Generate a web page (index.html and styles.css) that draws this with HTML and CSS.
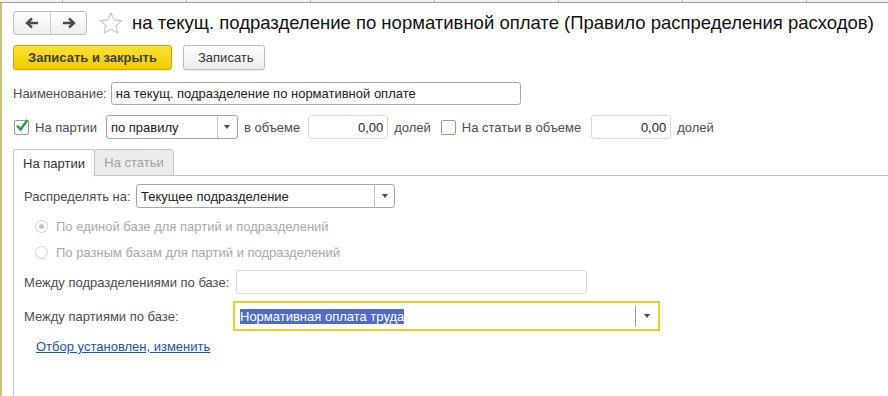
FILE: index.html
```html
<!DOCTYPE html>
<html lang="ru">
<head>
    <meta charset="UTF-8">
    <title>Правило распределения расходов</title>
    <link rel="stylesheet" href="styles.css">
</head>
<body>
    <div class="strip"></div>
    <div class="window">
        <div class="header">
            <div class="nav">
                <button class="nav-btn">
                    <svg width="14" height="12" viewBox="0 0 14 12"><path d="M13 6H3M7 1.5L2 6l5 4.5" fill="none" stroke="#4a4a4a" stroke-width="2.4"/></svg>
                </button>
                <button class="nav-btn">
                    <svg width="14" height="12" viewBox="0 0 14 12"><path d="M1 6h10M7 1.5L12 6l-5 4.5" fill="none" stroke="#4a4a4a" stroke-width="2.4"/></svg>
                </button>
            </div>
            <svg class="star" width="24" height="22" viewBox="0 0 24 22"><path d="M12 1l3.2 6.9 7.4.8-5.5 5 1.6 7.3L12 17.3 5.3 21l1.6-7.3-5.5-5 7.4-.8z" fill="none" stroke="#c4c4c4" stroke-width="1.1"/></svg>
            <h1 class="title">на текущ. подразделение по нормативной оплате (Правило распределения расходов)</h1>
        </div>

        <div class="actions">
            <button class="btn btn-main">Записать и закрыть</button>
            <button class="btn">Записать</button>
        </div>

        <div class="row row-name">
            <span class="label">Наименование:</span>
            <div class="field field-name">на текущ. подразделение по нормативной оплате</div>
        </div>

        <div class="row row-part">
            <span class="check checked">
                <svg width="14" height="13" viewBox="0 0 14 13"><path d="M2 6.5l3.5 4L12.5 1" fill="none" stroke="#2f9a3c" stroke-width="2.4"/></svg>
            </span>
            <span class="label label-part">На партии</span>
            <div class="field select select-rule">
                <span class="select-text">по правилу</span>
                <span class="select-btn"><i class="tri"></i></span>
            </div>
            <span class="label">в объеме</span>
            <div class="field num num-part">0,00</div>
            <span class="label">долей</span>
            <span class="check"></span>
            <span class="label">На статьи в объеме</span>
            <div class="field num num-item">0,00</div>
            <span class="label">долей</span>
        </div>

        <div class="tabs">
            <div class="tab active">На партии</div>
            <div class="tab">На статьи</div>
            <div class="tab-fill"></div>
        </div>

        <div class="panel">
            <div class="row row-distr">
                <span class="label label-distr">Распределять на:</span>
                <div class="field select select-distr">
                    <span class="select-text">Текущее подразделение</span>
                    <span class="select-btn"><i class="tri"></i></span>
                </div>
            </div>

            <div class="radio-row radio-first">
                <span class="radio on"></span>
                <span class="label muted">По единой базе для партий и подразделений</span>
            </div>
            <div class="radio-row">
                <span class="radio"></span>
                <span class="label muted">По разным базам для партий и подразделений</span>
            </div>

            <div class="row row-depts">
                <span class="label label-depts">Между подразделениями по базе:</span>
                <div class="field field-depts"></div>
            </div>

            <div class="row row-batch">
                <span class="label label-batch">Между партиями по базе:</span>
                <div class="field select select-batch">
                    <span class="select-text"><span class="hl">Нормативная оплата труда</span></span>
                    <span class="select-btn"><i class="tri"></i></span>
                </div>
            </div>

            <a class="link" href="#">Отбор установлен, изменить</a>
        </div>
    </div>
</body>
</html>
```

FILE: styles.css
```css
body {
    margin: 0;
    padding: 0;
    font-family: "Liberation Sans", Arial, sans-serif;
    font-size: 13px;
    color: #4d4d4d;
    background: #fff;
    width: 888px;
    height: 396px;
    overflow: hidden;
}
.strip {
    height: 2px;
    background-color: #f2f2f2;
    background-image: repeating-linear-gradient(90deg, transparent 0, transparent 62px, #b4b4b4 62px, #b4b4b4 63px, transparent 63px, transparent 124px);
    border-bottom: 1px solid #9a9a9a;
}
.window {
    border-left: 2px solid #c9c084;
    height: 393px;
    padding-left: 11px;
    box-sizing: border-box;
}
.header {
    display: flex;
    align-items: center;
    padding-top: 8px;
    height: 24px;
}
.nav {
    display: flex;
    height: 24px;
    border: 1px solid #bdbdbd;
    border-radius: 3px;
    box-sizing: border-box;
    background: linear-gradient(#ffffff, #eeeeee);
}
.nav-btn {
    width: 36px;
    height: 22px;
    border: none;
    background: transparent;
    padding: 0;
    display: flex;
    align-items: center;
    justify-content: center;
}
.nav-btn + .nav-btn {
    border-left: 1px solid #cfcfcf;
}
.star {
    margin-left: 12px;
    margin-top: -1px;
}
.title {
    margin: 0 0 0 9px;
    font-size: 18.5px;
    font-weight: normal;
    color: #111;
    white-space: nowrap;
}
.actions {
    display: flex;
    gap: 11px;
    margin-top: 10px;
}
.btn {
    height: 25px;
    padding: 0 14px;
    font-family: inherit;
    font-size: 13px;
    color: #333;
    border: 1px solid #bcbcbc;
    border-radius: 3px;
    background: linear-gradient(#ffffff, #ececec);
    box-shadow: 0 1px 1px rgba(0,0,0,0.08);
}
.btn-main {
    width: 159px;
    font-weight: bold;
    color: #404040;
    border-color: #c9a900;
    background: linear-gradient(#fbe037, #f1cc00);
}
.btn + .btn {
    width: 82px;
}
.row {
    display: flex;
    align-items: center;
}
.label {
    white-space: nowrap;
}
.field {
    box-sizing: border-box;
    height: 24px;
    border: 1px solid #d3d3d3;
    border-radius: 3px;
    background: #fff;
    color: #222;
    padding: 0 4px;
    display: flex;
    align-items: center;
    white-space: nowrap;
}
.row-name {
    margin-top: 12px;
}
.field-name {
    width: 410px;
    height: 23px;
    margin-left: 4px;
    border-color: #a9a9a9;
}
.row-part {
    margin-top: 10px;
}
.row-part .label {
    margin-left: 6px;
}
.check {
    width: 15px;
    height: 15px;
    box-sizing: border-box;
    border: 1px solid #9b9b9b;
    border-radius: 2px;
    background: #fff;
    display: inline-flex;
    align-items: center;
    justify-content: center;
    margin-left: 1px;
    overflow: visible;
}
.row-part .label + .check {
    margin-left: 10px;
}
.check svg {
    margin: -3px 0 0 1px;
    flex: none;
}
.select {
    padding: 0;
    border-color: #a6a6a6;
}
.select-text {
    flex: 1;
    padding-left: 4px;
    overflow: hidden;
}
.select-btn {
    width: 19px;
    align-self: stretch;
    border-left: 1px solid #c6c6c6;
    display: flex;
    align-items: center;
    justify-content: center;
}
.tri {
    width: 0;
    height: 0;
    border-left: 3.5px solid transparent;
    border-right: 3.5px solid transparent;
    border-top: 4px solid #4a4a4a;
}
.row-part .select-rule {
    width: 132px;
    margin-left: 9px;
}
.row-part .num {
    width: 80px;
    justify-content: flex-end;
    padding-right: 4px;
    border-color: #d8d8d8;
}
.row-part .num-part {
    margin-left: 8px;
}
.row-part .num-item {
    margin-left: 10px;
}
.tabs {
    display: flex;
    margin-top: 10px;
    height: 27px;
}
.tab {
    box-sizing: border-box;
    height: 28px;
    padding: 0;
    display: flex;
    align-items: center;
    justify-content: center;
    white-space: nowrap;
    border: 1px solid #c4c4c4;
    border-radius: 3px 3px 0 0;
    background: #ececec;
    color: #a3a3a3;
}
.tab.active {
    background: #fff;
    color: #333;
    border-bottom-color: #fff;
    width: 82px;
    position: relative;
    z-index: 1;
}
.tab + .tab {
    width: 80px;
    height: 27px;
    margin-left: -1px;
}
.tab-fill {
    flex: 1;
    border-bottom: 1px solid #c4c4c4;
}
.panel {
    border-left: 1px solid #c4c4c4;
    height: 230px;
    padding-left: 10px;
}
.row-distr {
    padding-top: 8px;
}
.label-distr {
    width: 112px;
}
.select-distr {
    width: 259px;
}
.radio-row {
    display: flex;
    align-items: center;
    margin-left: 11px;
    height: 26px;
}
.radio-first {
    margin-top: 5px;
}
.radio {
    width: 13px;
    height: 13px;
    box-sizing: border-box;
    border: 1px solid #cfcfcf;
    border-radius: 50%;
    margin-right: 8px;
    display: flex;
    align-items: center;
    justify-content: center;
}
.radio.on::after {
    content: "";
    width: 5px;
    height: 5px;
    border-radius: 50%;
    background: #c4c4c4;
}
.muted {
    color: #a8a8a8;
}
.row-depts {
    margin-top: 5px;
}
.label-depts {
    width: 212px;
}
.field-depts {
    width: 351px;
    border-color: #d8d8d8;
}
.row-batch {
    margin-top: 7px;
}
.label-batch {
    width: 209px;
}
.select-batch {
    width: 427px;
    height: 30px;
    border: 2px solid #f7cd1f;
    border-radius: 0;
}
.select-batch .select-text {
    padding-left: 5px;
}
.select-batch .select-btn {
    border-left: 1px solid #9e9e9e;
    width: 22px;
    margin: 3px 0;
}
.hl {
    background: #4f6bc8;
    color: #fff;
    padding: 1px 0 2px;
}
.link {
    display: inline-block;
    margin: 8px 0 0 12px;
    color: #2154a8;
    text-decoration: underline;
}
```
